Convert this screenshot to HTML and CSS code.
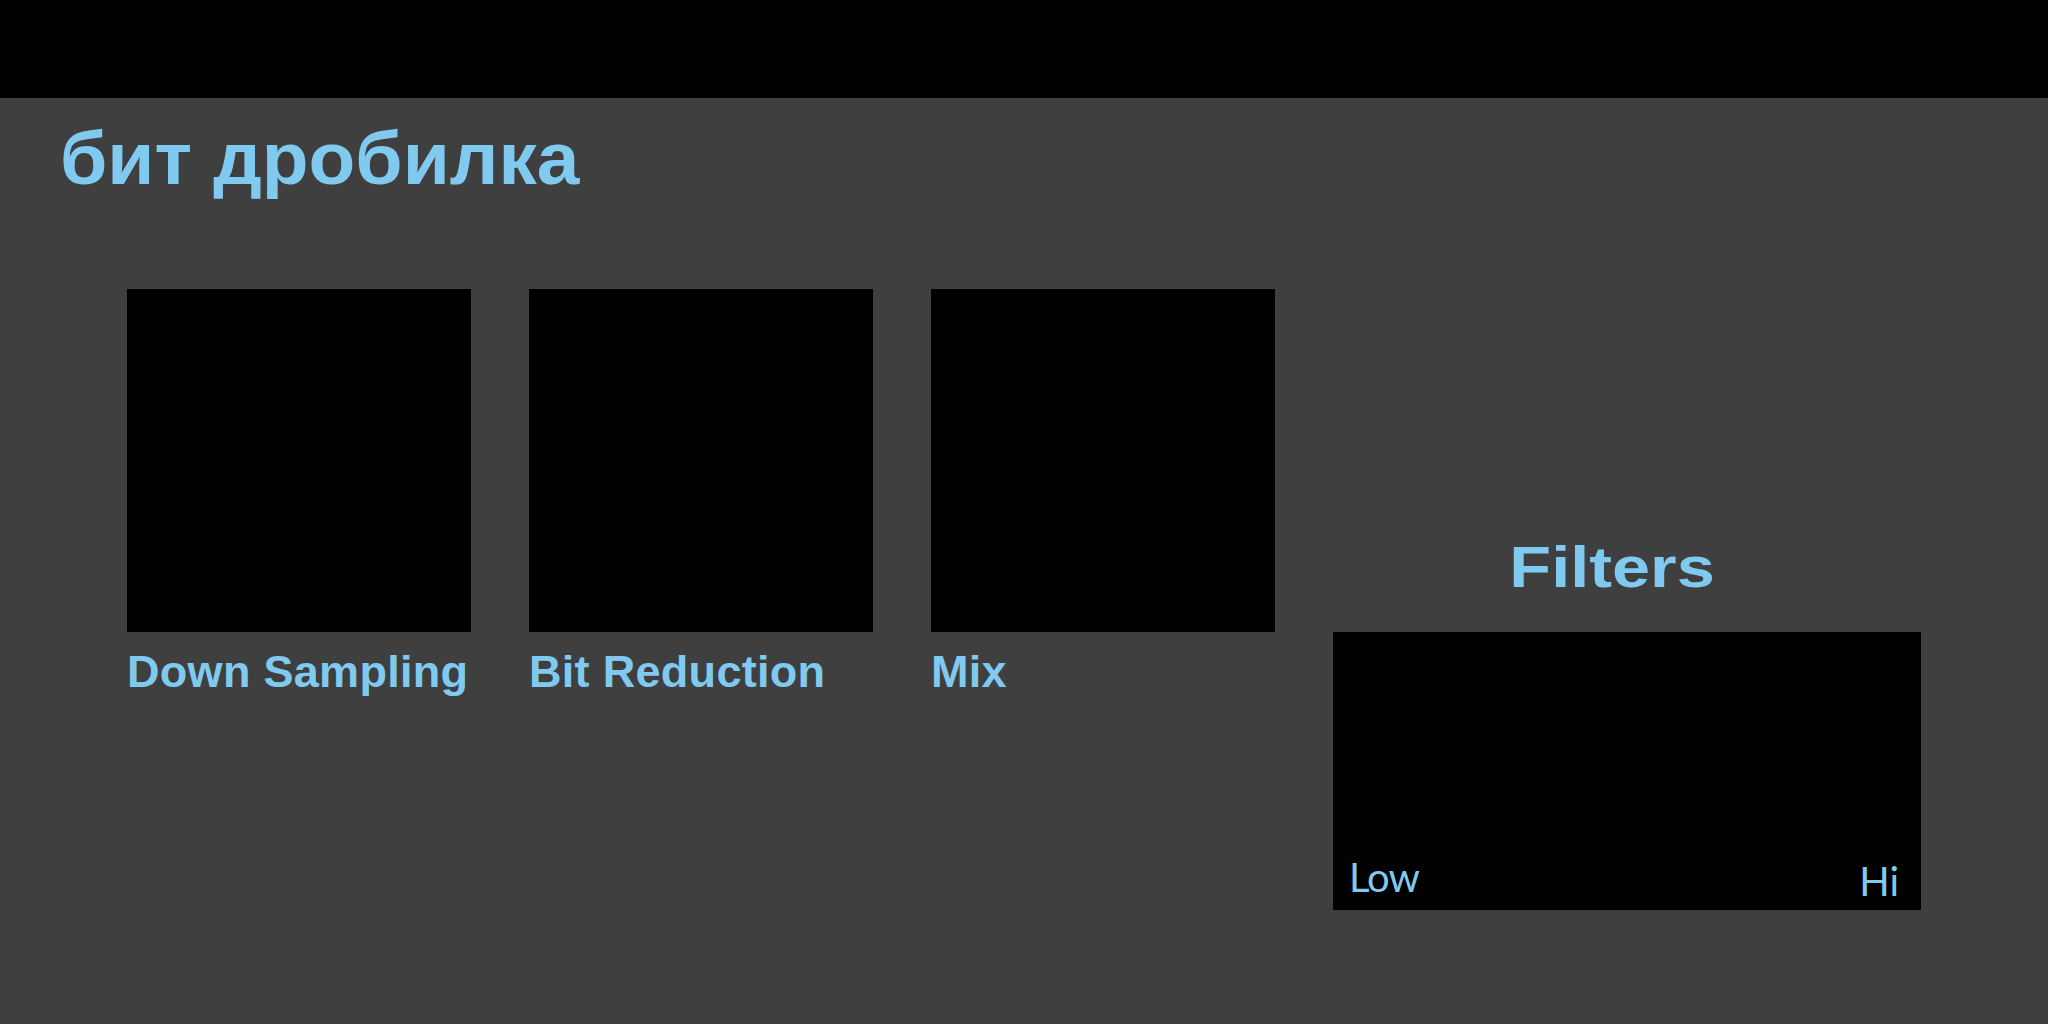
FILE: index.html
```html
<!DOCTYPE html>
<html lang="ru">
<head>
<meta charset="utf-8">
<title>бит дробилка</title>
<link rel="stylesheet" href="styles.css">
</head>
<body>
<div class="page">
  <header class="topbar"></header>
  <h1 class="title"><span>бит дробилка</span></h1>
  <main class="row">
    <section class="module">
      <div class="panel"></div>
      <div class="label">Down Sampling</div>
    </section>
    <section class="module">
      <div class="panel"></div>
      <div class="label">Bit Reduction</div>
    </section>
    <section class="module">
      <div class="panel"></div>
      <div class="label">Mix</div>
    </section>
    <section class="filters">
      <div class="filters-title"><span>Filters</span></div>
      <div class="filter-panel">
        <span class="range low">Low</span>
        <span class="range hi">Hi</span>
      </div>
    </section>
  </main>
</div>
</body>
</html>
```

FILE: styles.css
```css
html, body {
  margin: 0;
  padding: 0;
}

body {
  background: #3f3f3f;
  font-family: "Liberation Sans", Arial, sans-serif;
  color: #80caf0;
}

.page {
  width: 2048px;
  height: 1024px;
  overflow: hidden;
}

.topbar {
  height: 98px;
  background: #000;
}

.title {
  margin: 24px 0 0 0;
  padding-left: 60px;
  height: 74px;
  font-size: 74px;
  line-height: 1;
  font-weight: bold;
  color: #80caf0;
}

.title span {
  display: inline-block;
  transform: scaleX(1.035);
  transform-origin: left center;
}

.row {
  display: flex;
  align-items: flex-start;
  gap: 58px;
  margin-top: 93px;
  padding-left: 127px;
}

.module {
  width: 344px;
  display: flex;
  flex-direction: column;
}

.panel {
  width: 344px;
  height: 343px;
  background: #000;
}

.label {
  margin-top: 17px;
  font-size: 45px;
  line-height: 1;
  font-weight: bold;
  white-space: nowrap;
  letter-spacing: 0.3px;
}

.filters {
  width: 588px;
  display: flex;
  flex-direction: column;
}

.filters-title {
  margin-top: 249px;
  height: 58px;
  margin-bottom: 36px;
  padding-right: 30px;
  text-align: center;
  font-size: 58px;
  line-height: 1;
  font-weight: bold;
}

.filters-title span {
  display: inline-block;
  transform: scaleX(1.18);
}

.filter-panel {
  height: 278px;
  background: #000;
  display: flex;
  justify-content: space-between;
  align-items: flex-end;
  padding: 0 22px 9px 16px;
  box-sizing: border-box;
}

.range {
  font-family: Lato, "Noto Sans", sans-serif;
  font-size: 40px;
  line-height: 1;
  color: #80caf0;
}

.range.low {
  margin-bottom: 4px;
  letter-spacing: -1px;
}
```
